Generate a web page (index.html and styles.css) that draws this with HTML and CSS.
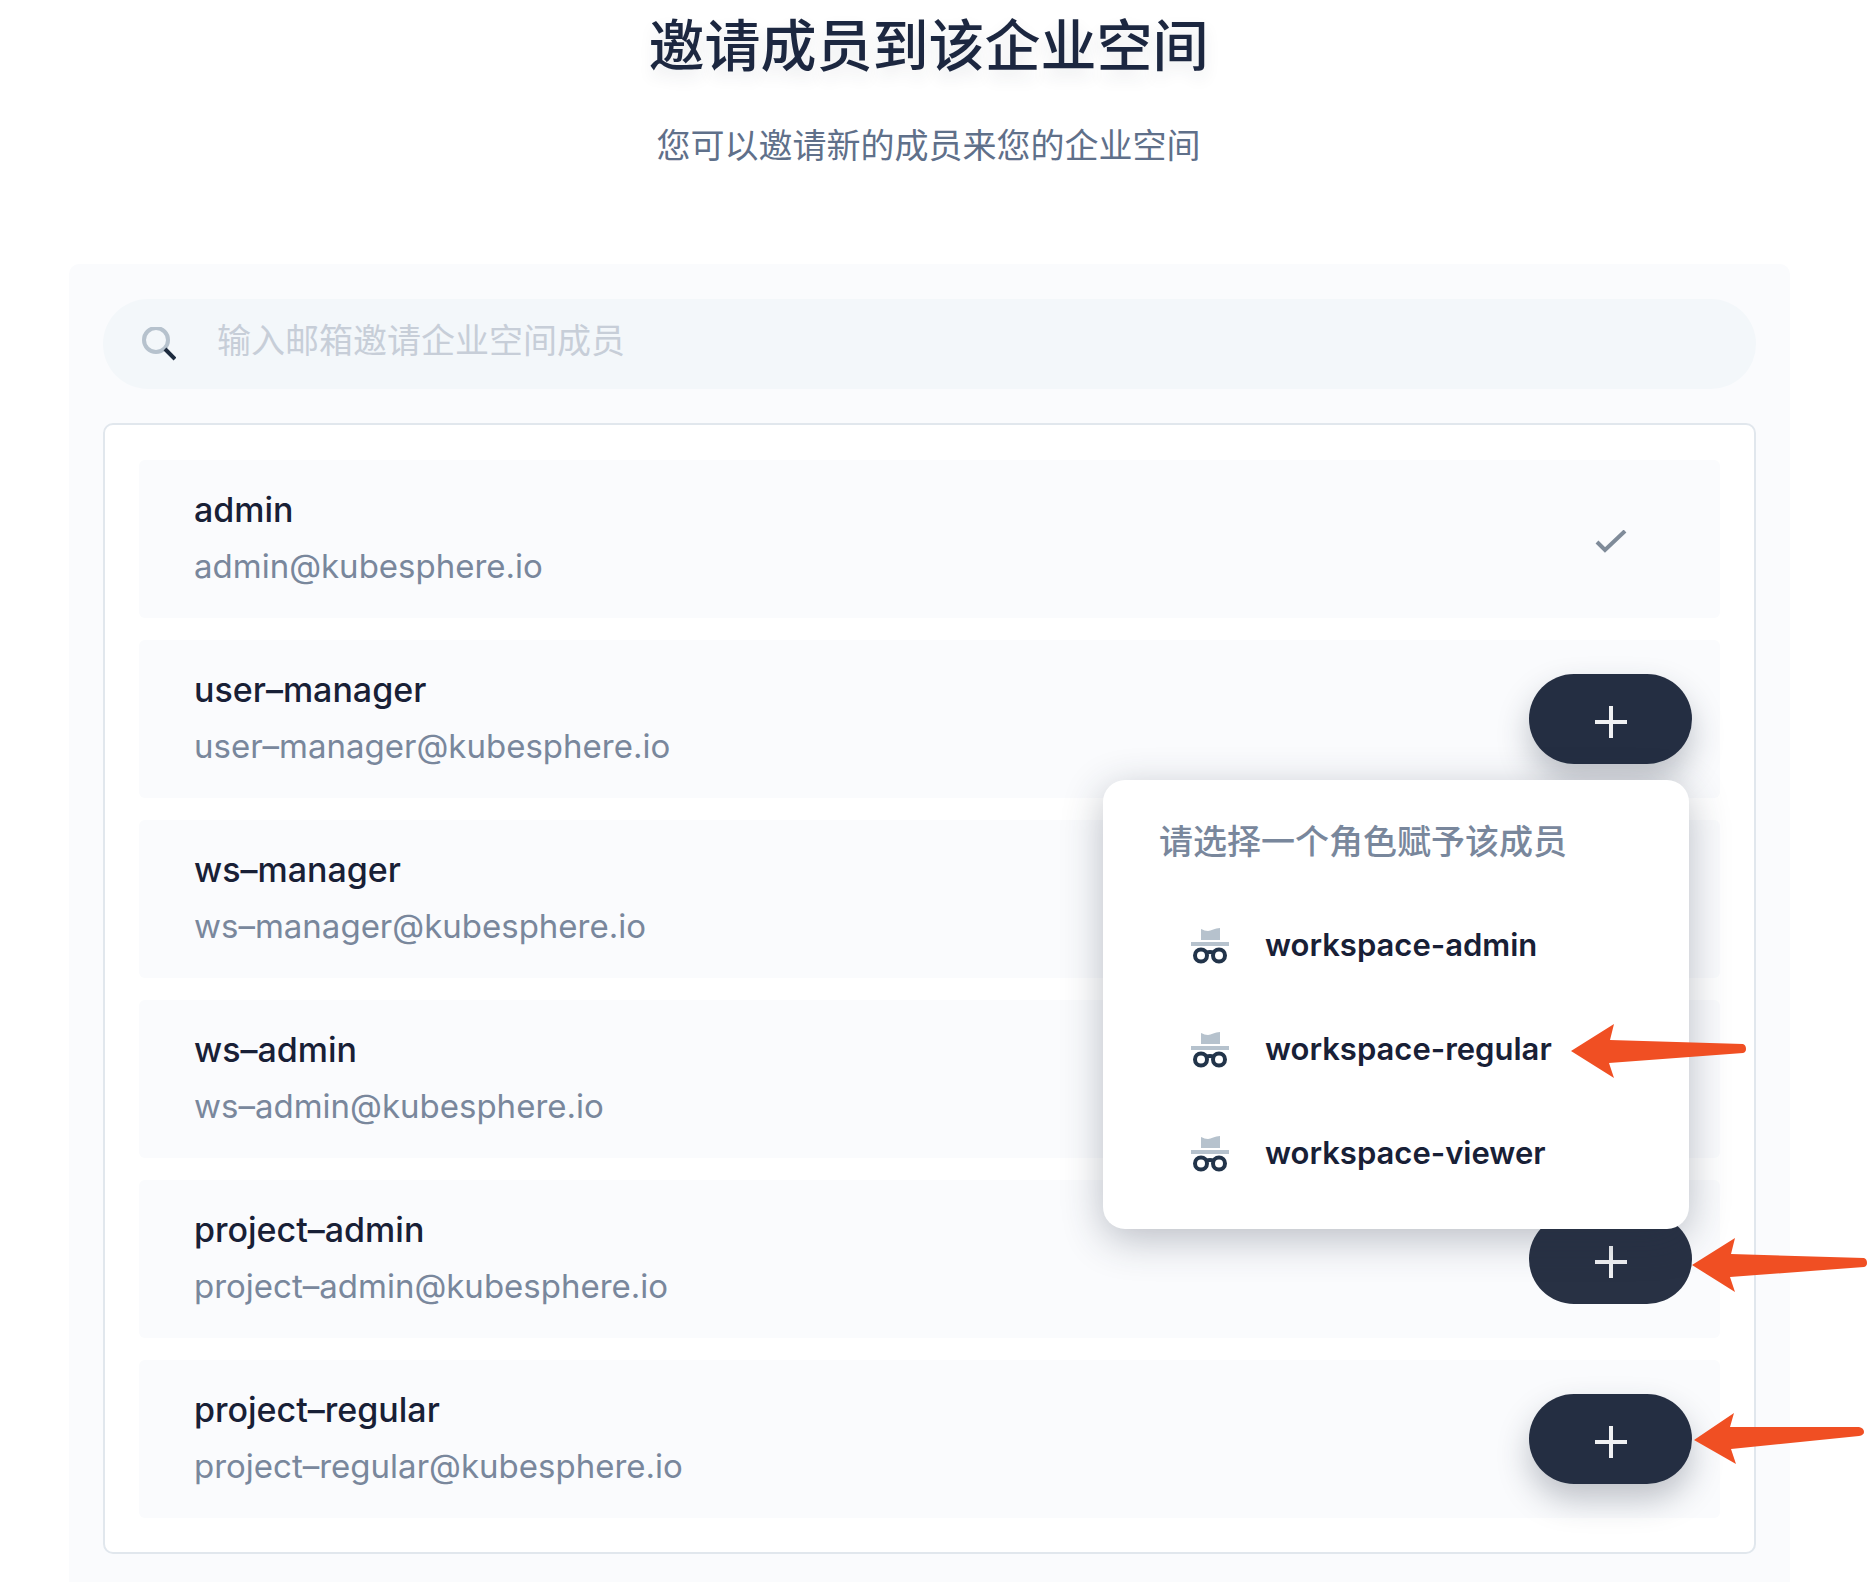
FILE: index.html
```html
<!DOCTYPE html>
<html lang="zh-CN">
<head>
<meta charset="utf-8">
<meta name="viewport" content="width=device-width, initial-scale=1">
<title>邀请成员到该企业空间</title>
<link rel="stylesheet" href="styles.css">
</head>
<body>
<svg class="sprite" aria-hidden="true">
  <symbol id="plus" viewBox="0 0 32 32"><path d="M16 0v32M0 16h32" fill="none" stroke="currentColor" stroke-width="4"/></symbol>
  <symbol id="role" viewBox="0 0 40 36">
    <path d="M10 1c3 1 4 2 7 2s7-3 12-3v12H10zM0 14h38v4H0z" fill="#b6c2cd"/>
    <g fill="none" stroke="#22344a" stroke-width="4"><circle cx="10" cy="27.500" r="6"/><circle cx="28" cy="27.500" r="6"/><path d="M15 25q4-2 8 0"/></g>
  </symbol>
  <symbol id="arrow" viewBox="0 0 176 54"><path d="M0 27 43 0 39 16 172 20Q175 21 175 25 175 28 172 29L38 39 43 54Z" fill="#f04f23"/></symbol>
  <symbol id="arrow-up" viewBox="0 0 170 51"><path d="M0 27 40 0 36 14 165 14Q170 15 170 19 170 22 165 23L37 36 42 51Z" fill="#f04f23"/></symbol>
</svg>
<main class="page">
  <header class="intro">
    <h1 class="title">邀请成员到该企业空间</h1>
    <p class="subtitle">您可以邀请新的成员来您的企业空间</p>
  </header>
  <section class="panel">
    <label class="search">
      <svg class="search-icon" viewBox="0 0 34 34" aria-hidden="true"><circle cx="14" cy="13" r="12" fill="none" stroke="#b6c2cd" stroke-width="4"/><path d="m23 22 10 10" stroke="#1d2b3e" stroke-width="4"/></svg>
      <input class="search-input" type="search" placeholder="输入邮箱邀请企业空间成员" aria-label="输入邮箱邀请企业空间成员">
    </label>
    <ul class="members">
      <li class="member">
        <div class="info"><div class="name">admin</div><div class="email">admin@kubesphere.io</div></div>
        <div class="action"><svg class="check" viewBox="0 0 32 24" aria-hidden="true"><path d="m2 12 8 8L30 1" fill="none" stroke="#7f8b99" stroke-width="4"/></svg></div>
      </li>
      <li class="member">
        <div class="info"><div class="name">user–manager</div><div class="email">user–manager@kubesphere.io</div></div>
        <div class="action">
          <button class="add" type="button" aria-label="user-manager"><svg class="plus"><use href="#plus"/></svg></button>
          <div class="popup">
            <h2 class="popup-title">请选择一个角色赋予该成员</h2>
            <button class="role" type="button"><svg class="role-icon"><use href="#role"/></svg>workspace-admin</button>
            <button class="role" type="button"><svg class="role-icon"><use href="#role"/></svg>workspace-regular<svg class="arrow arrow-role"><use href="#arrow"/></svg></button>
            <button class="role" type="button"><svg class="role-icon"><use href="#role"/></svg>workspace-viewer</button>
          </div>
        </div>
      </li>
      <li class="member">
        <div class="info"><div class="name">ws–manager</div><div class="email">ws–manager@kubesphere.io</div></div>
      </li>
      <li class="member">
        <div class="info"><div class="name">ws–admin</div><div class="email">ws–admin@kubesphere.io</div></div>
      </li>
      <li class="member">
        <div class="info"><div class="name">project–admin</div><div class="email">project–admin@kubesphere.io</div></div>
        <div class="action">
          <button class="add add-hover" type="button" aria-label="project-admin"><svg class="plus"><use href="#plus"/></svg></button>
          <svg class="arrow arrow-add"><use href="#arrow"/></svg>
        </div>
      </li>
      <li class="member">
        <div class="info"><div class="name">project–regular</div><div class="email">project–regular@kubesphere.io</div></div>
        <div class="action">
          <button class="add" type="button" aria-label="project-regular"><svg class="plus"><use href="#plus"/></svg></button>
          <svg class="arrow arrow-last"><use href="#arrow-up"/></svg>
        </div>
      </li>
    </ul>
  </section>
</main>
</body>
</html>
```

FILE: styles.css
```css
* { box-sizing: border-box; }

body {
  margin: 0;
  background: #fff;
  color: #242e42;
  font-family: Inter, "Noto Sans CJK SC", sans-serif;
  font-size: 34px;
}

h1, h2, p, ul { margin: 0; padding: 0; }
button, input { font: inherit; color: inherit; border: 0; background: none; }
.sprite { position: absolute; width: 0; height: 0; }

.page { padding: 0 80px 0 69px; }

.intro { padding: 0 2px 94px 0; text-align: center; }
.title {
  color: #1c2740;
  font-family: "Noto Sans CJK SC", sans-serif;
  font-size: 56px;
  font-weight: 500;
  line-height: 84px;
  text-shadow: 0 8px 16px rgba(36, 46, 66, 0.1);
}
.subtitle {
  margin-top: 34px;
  color: #5f708a;
  font-family: "Noto Sans CJK SC", sans-serif;
  line-height: 52px;
}

.panel {
  padding: 35px 34px 28px;
  border-radius: 10px 10px 0 0;
  background: #fafbfd;
}

.search {
  display: flex;
  align-items: center;
  gap: 41px;
  height: 90px;
  padding: 0 39px;
  border-radius: 45px;
  background: #f3f7fa;
}
.search-icon { flex: none; width: 34px; height: 34px; }
.search-input {
  flex: 1;
  min-width: 0;
  height: 52px;
  padding: 0;
  margin-bottom: 12px;
  outline: 0;
  font-family: "Noto Sans CJK SC", sans-serif;
}
.search-input::placeholder { color: #c7ced8; opacity: 1; }

.members {
  display: grid;
  gap: 22px;
  margin-top: 34px;
  padding: 35px 34px 34px;
  border: 2px solid #e1e7ed;
  border-radius: 10px;
  background: #fff;
  list-style: none;
}
.member {
  display: flex;
  align-items: center;
  justify-content: space-between;
  height: 158px;
  padding: 0 28px 0 55px;
  border-radius: 6px;
  background: #fafbfd;
}
.info { padding-bottom: 2px; }
.name, .email { line-height: 56px; }
.name { color: #182036; font-size: 34px; font-weight: 500; }
.email { color: #79879c; font-size: 33px; }

.action {
  position: relative;
  display: flex;
  justify-content: center;
  width: 163px;
}
.check { width: 32px; height: 24px; margin-top: 6px; }
.add {
  display: flex;
  align-items: center;
  justify-content: center;
  width: 100%;
  height: 90px;
  padding: 6px 0 0;
  border-radius: 45px;
  background: #242e42;
  color: #f0f1f3;
  box-shadow: 0 16px 32px rgba(36, 46, 66, 0.28);
}
.add-hover { background: #283144; box-shadow: none; }
.plus { width: 32px; height: 32px; }

.popup {
  position: absolute;
  z-index: 2;
  top: 106px;
  right: 3px;
  width: 586px;
  padding: 34px 0 25px;
  border-radius: 22px;
  background: #fff;
  box-shadow: 0 10px 40px rgba(36, 46, 66, 0.3);
}
.popup-title {
  padding: 0 56px 26px;
  color: #79879c;
  font-family: "Noto Sans CJK SC", sans-serif;
  font-size: 34px;
  font-weight: 500;
  line-height: 52px;
}
.role {
  position: relative;
  display: flex;
  align-items: center;
  gap: 34px;
  width: 100%;
  height: 104px;
  padding: 0 88px;
  color: #182036;
  font-size: 31px;
  font-weight: 600;
  text-align: left;
}
.role-icon { flex: none; width: 40px; height: 36px; margin-top: 4px; }

.arrow { position: absolute; z-index: 3; width: 176px; height: 54px; }
.arrow-role { left: 468px; top: 28px; }
.arrow-add { left: 163px; top: 24px; }
.arrow-last { left: 165px; top: 19px; width: 170px; height: 51px; }
```
